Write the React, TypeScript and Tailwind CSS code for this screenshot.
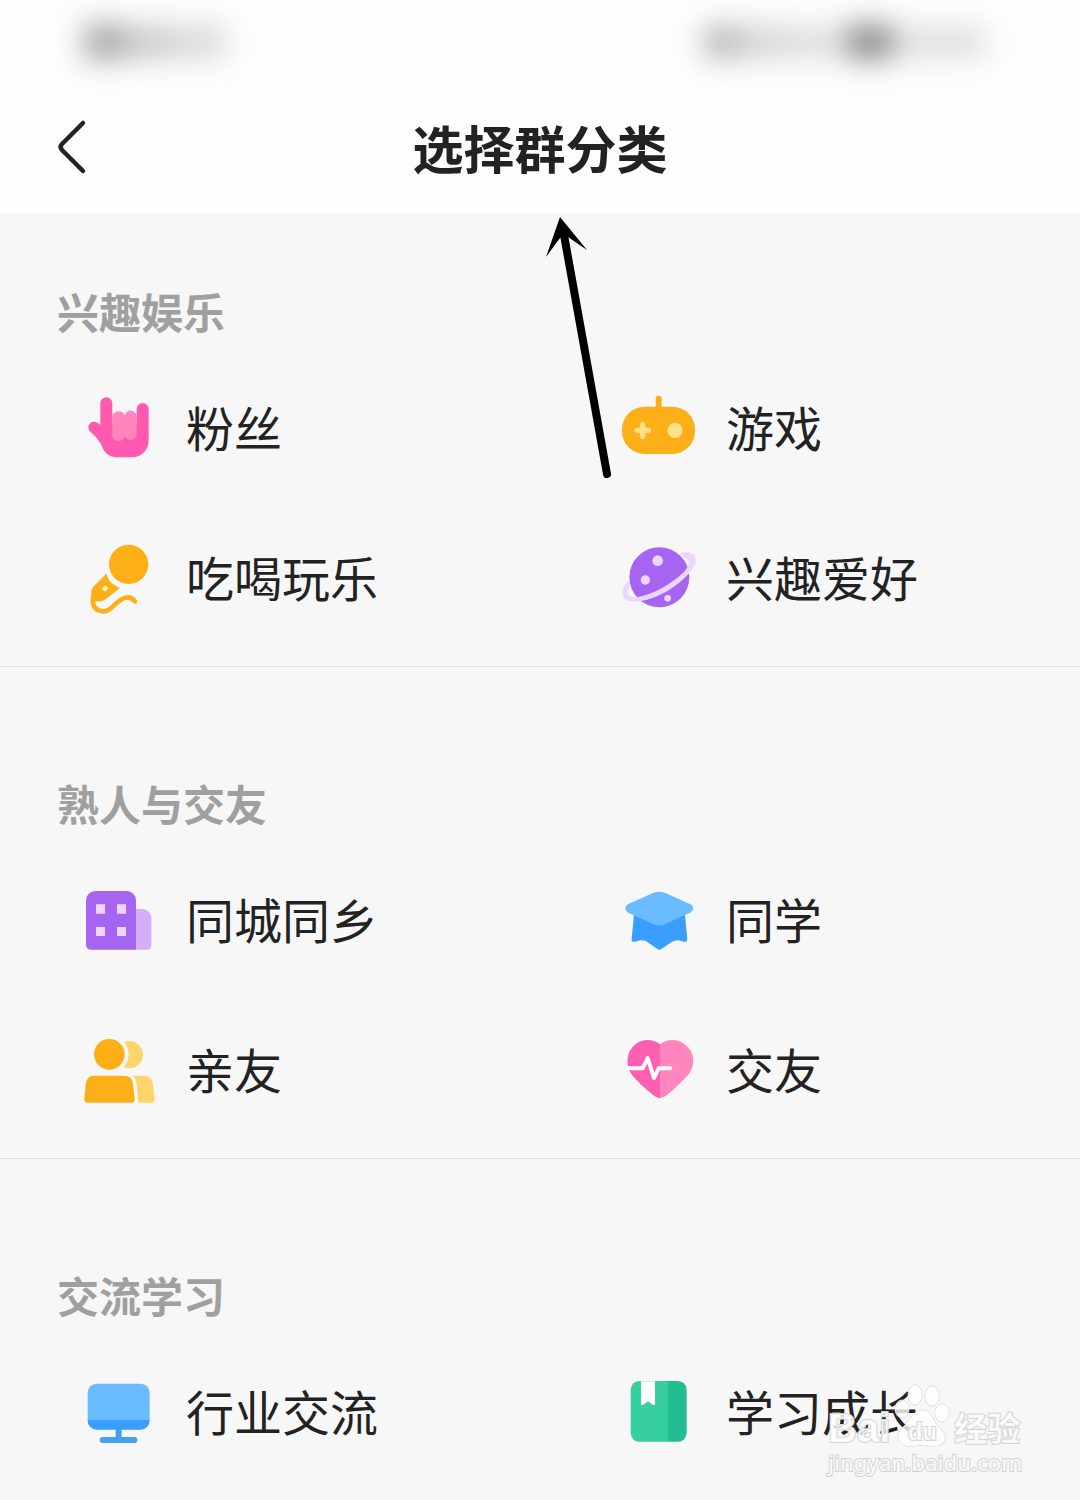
import type { ReactNode } from 'react';

interface Category {
  label: string;
  icon: ReactNode;
}

interface CategoryGroup {
  title: string;
  items: Category[];
}

const iconClass = 'w-20 h-20 shrink-0';

function RockHandIcon() {
  return (
    <svg viewBox="60 24 240 240" className={iconClass} aria-hidden="true">
      <path
        d="M121 70a18 18 0 0 1 36 0V130H230V87a18 18 0 0 1 36 0V182a50 50 0 0 1-50 50H176C146 232 131 217 124 194C114 176 102 165 91 155A17 17 0 0 1 113 129L121 134Z"
        fill="#ff5aaf"
      />
      <path
        d="M157 113a19 19 0 0 1 37-6a18 18 0 0 1 36 6V160a19 19 0 0 1-36 9a19 19 0 0 1-37-9Z"
        fill="#ff85bd"
      />
    </svg>
  );
}

function GamepadIcon() {
  return (
    <svg viewBox="60 24 240 240" className={iconClass} aria-hidden="true">
      <path d="M176 56V90" stroke="#fdaf17" strokeWidth="18" strokeLinecap="round" />
      <rect x="66" y="80" width="219" height="142" rx="68" fill="#fdaf17" />
      <path d="M128 133V170M110 151H146" stroke="#ffe08a" strokeWidth="15" strokeLinecap="round" />
      <circle cx="128" cy="151" r="13" fill="#ffe08a" />
      <circle cx="225" cy="151" r="23" fill="#ffe08a" />
    </svg>
  );
}

function MicrophoneIcon() {
  return (
    <svg viewBox="60 474 240 240" className={iconClass} aria-hidden="true">
      <circle cx="206" cy="553" r="59" fill="#fdaf17" />
      <path
        d="M139 581C145 602 158 615 180 624L135 659C124 666 112 666 102 662L94 652V634C94 629 96 625 99 621Z"
        fill="#fdaf17"
      />
      <path
        d="M99 652C95 680 110 694 130 694C160 694 166 655 203 652C213 652 220 657 225 664"
        fill="none"
        stroke="#fdaf17"
        strokeWidth="14"
        strokeLinecap="round"
      />
      <path d="M130 631L141 620" stroke="#fff0c8" strokeWidth="13" />
    </svg>
  );
}

function PlanetIcon() {
  return (
    <svg viewBox="60 474 240 240" className={iconClass} aria-hidden="true">
      <circle cx="178" cy="592" r="90" fill="#a565f0" />
      <circle cx="173" cy="542" r="16" fill="#ead6ff" />
      <circle cx="136" cy="600" r="14" fill="#ead6ff" />
      <circle cx="203" cy="655" r="10" fill="#ead6ff" />
      <path
        d="M240 520C262 512 286 517 287 539C288 569 237 614 192 639C147 663 92 673 73 656C60 640 70 611 89 603L89 620C80 632 84 648 97 651C120 655 160 639 190 622C224 601 253 580 262 562C270 549 265 536 253 534Z"
        fill="#ead6ff"
      />
    </svg>
  );
}

function BuildingIcon() {
  return (
    <svg viewBox="60 30 240 240" className={iconClass} aria-hidden="true">
      <path d="M227 117H247a27 27 0 0 1 27 27V226a13 13 0 0 1-13 13H227Z" fill="#d5adf8" />
      <path d="M78 91a28 28 0 0 1 28-28H200a28 28 0 0 1 28 28V239H92a14 14 0 0 1-14-14Z" fill="#a565f0" />
      <path d="M108 103h27v28h-27zM171 103h27v28h-27zM108 171h27v27h-27zM171 171h27v27h-27z" fill="#ecd5ff" />
    </svg>
  );
}

function GraduationIcon() {
  return (
    <svg viewBox="60 30 240 240" className={iconClass} aria-hidden="true">
      <path
        d="M103 125H254L262 207C262 214 257 217 251 215C237 208 223 209 211 218L185 236C180 240 176 240 171 236L145 218C133 208 119 209 105 215C98 217 94 213 95 207Z"
        fill="#399eff"
      />
      <path
        d="M161 68C172 64 183 64 194 68L270 102C283 109 283 121 270 128L194 163C183 168 172 168 161 163L85 128C73 121 73 109 85 102Z"
        fill="#68bcff"
      />
    </svg>
  );
}

function PeopleIcon() {
  return (
    <svg viewBox="60 480 240 240" className={iconClass} aria-hidden="true">
      <circle cx="208" cy="554" r="41" fill="#ffd56b" />
      <path d="M190 617H250C267 617 275 624 278 638L284 687C285 694 281 698 274 698H190Z" fill="#ffd56b" />
      <circle cx="148" cy="553" r="58" fill="#f7f7f7" />
      <path d="M190 610C217 612 227 620 230 642L235 700H190Z" fill="#f7f7f7" />
      <circle cx="148" cy="553" r="46" fill="#fdaf17" />
      <path
        d="M104 617H190C209 617 217 625 219 642L224 687C225 695 221 698 213 698H83C76 698 72 694 73 687L77 642C79 626 88 617 104 617Z"
        fill="#fdaf17"
      />
    </svg>
  );
}

function HeartIcon() {
  return (
    <svg viewBox="60 480 240 240" className={iconClass} aria-hidden="true">
      <path
        d="M180 523C162 507 129 504 107 522C81 542 75 580 92 609C106 630 138 657 160 676C166 681 173 684 180 684Z"
        fill="#ff5fb0"
      />
      <path
        d="M180 523C198 507 231 504 253 522C283 544 288 582 267 611C251 631 223 656 200 676C194 681 187 684 180 684Z"
        fill="#ff85bf"
      />
      <path
        d="M86 595H128L143 564L162 624L176 595H211"
        fill="none"
        stroke="#fff"
        strokeWidth="12"
        strokeLinecap="round"
        strokeLinejoin="round"
      />
    </svg>
  );
}

function MonitorIcon() {
  return (
    <svg viewBox="60 36 240 240" className={iconClass} aria-hidden="true">
      <path d="M176 200V240M128 240H223" stroke="#459ff2" strokeWidth="18" strokeLinecap="round" />
      <path d="M83 98a27 27 0 0 1 27-27H242a27 27 0 0 1 27 27V182H83Z" fill="#68bcff" />
      <path d="M83 180H269a27 27 0 0 1-27 29H110a27 27 0 0 1-27-29Z" fill="#399eff" />
    </svg>
  );
}

function BookIcon() {
  return (
    <svg viewBox="60 36 240 240" className={iconClass} aria-hidden="true">
      <path d="M204 63H234a26 26 0 0 1 26 26V219a26 26 0 0 1-26 26H204Z" fill="#22bd91" />
      <path d="M118 63H204V245H118a26 26 0 0 1-26-26V89a26 26 0 0 1 26-26Z" fill="#38cfa0" />
      <path d="M123 64H165V135H160L144 124L128 135H123Z" fill="#fff" />
    </svg>
  );
}

const groups: CategoryGroup[] = [
  {
    title: '兴趣娱乐',
    items: [
      { label: '粉丝', icon: <RockHandIcon /> },
      { label: '游戏', icon: <GamepadIcon /> },
      { label: '吃喝玩乐', icon: <MicrophoneIcon /> },
      { label: '兴趣爱好', icon: <PlanetIcon /> },
    ],
  },
  {
    title: '熟人与交友',
    items: [
      { label: '同城同乡', icon: <BuildingIcon /> },
      { label: '同学', icon: <GraduationIcon /> },
      { label: '亲友', icon: <PeopleIcon /> },
      { label: '交友', icon: <HeartIcon /> },
    ],
  },
  {
    title: '交流学习',
    items: [
      { label: '行业交流', icon: <MonitorIcon /> },
      { label: '学习成长', icon: <BookIcon /> },
    ],
  },
];

function StatusBar() {
  return (
    <div className="flex h-21 items-center justify-between pl-21 pr-24" aria-hidden="true">
      <div className="flex items-center blur-[14px]">
        <div className="h-9 w-10 bg-[#a8a8a8]" />
        <div className="h-8 w-11 bg-[#c8c8c8]" />
        <div className="h-8 w-14 bg-[#d8d8d8]" />
      </div>
      <div className="flex items-center blur-[14px]">
        <div className="h-8 w-9 bg-[#b8b8b8]" />
        <div className="h-8 w-10 bg-[#d4d4d4]" />
        <div className="h-7 w-17 bg-[#dadada]" />
        <div className="h-9 w-11 bg-[#8f8f8f]" />
        <div className="h-7 w-23 bg-[#dcdcdc]" />
      </div>
    </div>
  );
}

function Header() {
  return (
    <header className="bg-[#fdfdfd]">
      <StatusBar />
      <div className="grid h-[129px] grid-cols-[1fr_auto_1fr] items-center">
        <button type="button" aria-label="返回" className="ml-12 w-12 cursor-pointer">
          <svg viewBox="0 0 48 60" className="h-15 w-12" fill="none" aria-hidden="true">
            <path
              d="M35 4L14 25Q11 28 14 31L35 52"
              stroke="#222"
              strokeWidth="4.5"
              strokeLinecap="round"
              strokeLinejoin="round"
            />
          </svg>
        </button>
        <h1 className="pb-1 text-[51px] leading-[64px] font-bold text-[#222]">选择群分类</h1>
      </div>
    </header>
  );
}

function GroupSection({ title, items }: CategoryGroup) {
  return (
    <section className="border-b border-[#e2e2e2] pt-27 pb-[13px] first:pt-[70px] last:border-b-0">
      <h2 className="mb-[14px] px-[57px] text-[42px] leading-[56px] font-bold text-[#a0a0a0]">{title}</h2>
      <div className="grid grid-cols-2">
        {items.map((item) => (
          <button
            key={item.label}
            type="button"
            className="flex h-[150px] cursor-pointer items-center gap-[26px] pl-20 text-left text-[48px] leading-[64px] text-[#222]"
          >
            {item.icon}
            <span className="pb-1">{item.label}</span>
          </button>
        ))}
      </div>
    </section>
  );
}

function PointerArrow() {
  return (
    <svg
      viewBox="0 0 80 270"
      className="pointer-events-none absolute top-[213px] left-1/2 h-[270px] w-20"
      aria-hidden="true"
    >
      <path d="M24 22L67 261" stroke="#000" strokeWidth="8" strokeLinecap="round" />
      <path d="M20 4L47 37L28 24L20 25L6 44Z" fill="#000" />
    </svg>
  );
}

function Watermark() {
  return (
    <div className="pointer-events-none absolute right-[58px] bottom-6 font-bold text-white/80 [-webkit-text-stroke:2px_#d4d4d4] [paint-order:stroke]">
      <div className="flex h-16 items-end gap-1 font-['Liberation_Sans','Noto_Sans_CJK_SC',sans-serif]">
        <span className="text-[40px] leading-10">Bai</span>
        <div className="relative h-16 w-14">
          <svg viewBox="0 0 56 64" className="h-16 w-14" fill="#fff" fillOpacity="0.8" stroke="#d0d0d0" aria-hidden="true">
            <ellipse cx="21" cy="11" rx="7" ry="10" />
            <ellipse cx="38" cy="12" rx="7" ry="10" />
            <ellipse cx="8" cy="25" rx="7" ry="9" />
            <ellipse cx="48" cy="29" rx="7" ry="9" />
            <path d="M28 26C37 26 39 37 45 43C52 49 55 60 42 62C35 63 33 61 28 61C22 61 19 63 13 62C1 60 3 48 9 43C16 37 19 26 28 26Z" />
          </svg>
          <span className="absolute inset-x-0 bottom-1 text-center text-[24px] leading-6">du</span>
        </div>
        <span className="text-[33px] leading-9">经验</span>
      </div>
      <div className="font-['Noto_Sans','Noto_Sans_CJK_SC',sans-serif] text-[22px] leading-7 font-medium">
        jingyan.baidu.com
      </div>
    </div>
  );
}

export default function App() {
  return (
    <div className="relative min-h-screen bg-[#f7f7f7] font-['Noto_Sans_CJK_SC',sans-serif]">
      <Header />
      <main>
        {groups.map((group) => (
          <GroupSection key={group.title} title={group.title} items={group.items} />
        ))}
      </main>
      <PointerArrow />
      <Watermark />
    </div>
  );
}
